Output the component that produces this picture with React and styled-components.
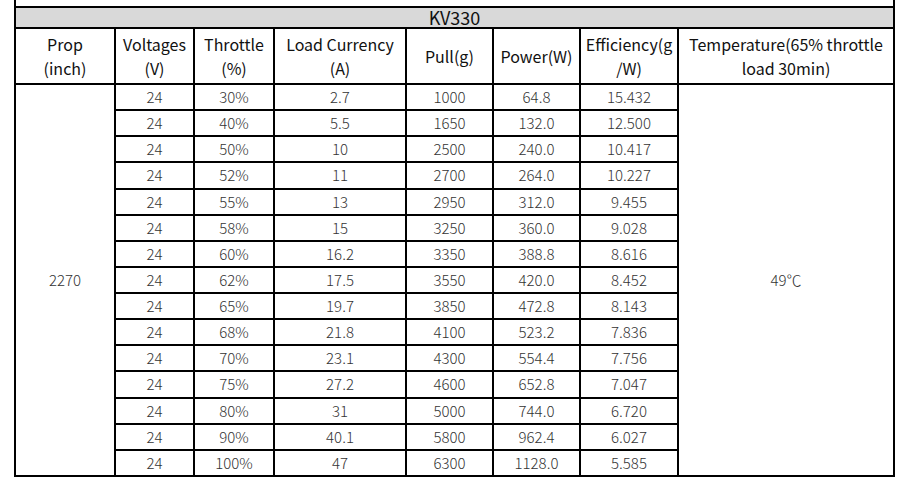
import React from "react";
import styled, { createGlobalStyle } from "styled-components";

const Global = createGlobalStyle`
  html, body { margin: 0; padding: 0; background: #fff; }
  body { font-family: "Noto Sans CJK SC", "Noto Sans", sans-serif; }
`;

const Page = styled.div`
  padding: 0 0 0 14px;
`;

const Table = styled.table`
  border-collapse: collapse;
  table-layout: fixed;
  width: 879px;
  font-family: "Noto Sans CJK SC", "Noto Sans", sans-serif;
`;

const Cell = styled.td`
  border: 2px solid #000;
  padding: 0;
  text-align: center;
  vertical-align: middle;
  font-size: 15px;
  font-weight: 300;
  line-height: 20px;
  color: #333;
  height: 24.13px;
  white-space: nowrap;
`;

const Spacer = styled.td`
  border-left: 2px solid #000;
  border-right: 2px solid #000;
  border-bottom: 2px solid #000;
  border-top: none;
  padding: 0;
  height: 6px;
`;

const Band = styled.td`
  border: 2px solid #000;
  background: #d9d9d9;
  padding: 0;
  height: 19px;
  text-align: center;
  font-size: 18px;
  line-height: 19px;
  color: #111;
`;

const Head = styled.th`
  border: 2px solid #000;
  padding: 0;
  font-weight: 400;
  font-size: 16px;
  line-height: 24px;
  color: #111;
  height: 54px;
  text-align: center;
  vertical-align: middle;
  white-space: nowrap;
`;

const widths = [100, 79, 80, 132, 87, 87, 98, 216];

const rows = [
  ["30%", "2.7", "1000", "64.8", "15.432"],
  ["40%", "5.5", "1650", "132.0", "12.500"],
  ["50%", "10", "2500", "240.0", "10.417"],
  ["52%", "11", "2700", "264.0", "10.227"],
  ["55%", "13", "2950", "312.0", "9.455"],
  ["58%", "15", "3250", "360.0", "9.028"],
  ["60%", "16.2", "3350", "388.8", "8.616"],
  ["62%", "17.5", "3550", "420.0", "8.452"],
  ["65%", "19.7", "3850", "472.8", "8.143"],
  ["68%", "21.8", "4100", "523.2", "7.836"],
  ["70%", "23.1", "4300", "554.4", "7.756"],
  ["75%", "27.2", "4600", "652.8", "7.047"],
  ["80%", "31", "5000", "744.0", "6.720"],
  ["90%", "40.1", "5800", "962.4", "6.027"],
  ["100%", "47", "6300", "1128.0", "5.585"],
];

const headers = [
  ["Prop", "(inch)"],
  ["Voltages", "(V)"],
  ["Throttle", "(%)"],
  ["Load Currency", "(A)"],
  ["Pull(g)"],
  ["Power(W)"],
  ["Efficiency(g", "/W)"],
  ["Temperature(65% throttle", "load 30min)"],
];

export default function App() {
  return (
    <Page>
      <Global />
      <Table>
        <colgroup>
          {widths.map((w, i) => (
            <col key={i} style={{ width: w }} />
          ))}
        </colgroup>
        <tbody>
          <tr>
            <Spacer colSpan={8} />
          </tr>
          <tr>
            <Band colSpan={8}>KV330</Band>
          </tr>
          <tr>
            {headers.map((h, i) => (
              <Head key={i}>
                {h.map((l, j) => (
                  <div key={j}>{l}</div>
                ))}
              </Head>
            ))}
          </tr>
          {rows.map((r, i) => (
            <tr key={i}>
              {i === 0 && <Cell rowSpan={15}>2270</Cell>}
              <Cell>24</Cell>
              {r.map((v, j) => (
                <Cell key={j}>{v}</Cell>
              ))}
              {i === 0 && <Cell rowSpan={15}>49℃</Cell>}
            </tr>
          ))}
        </tbody>
      </Table>
    </Page>
  );
}
